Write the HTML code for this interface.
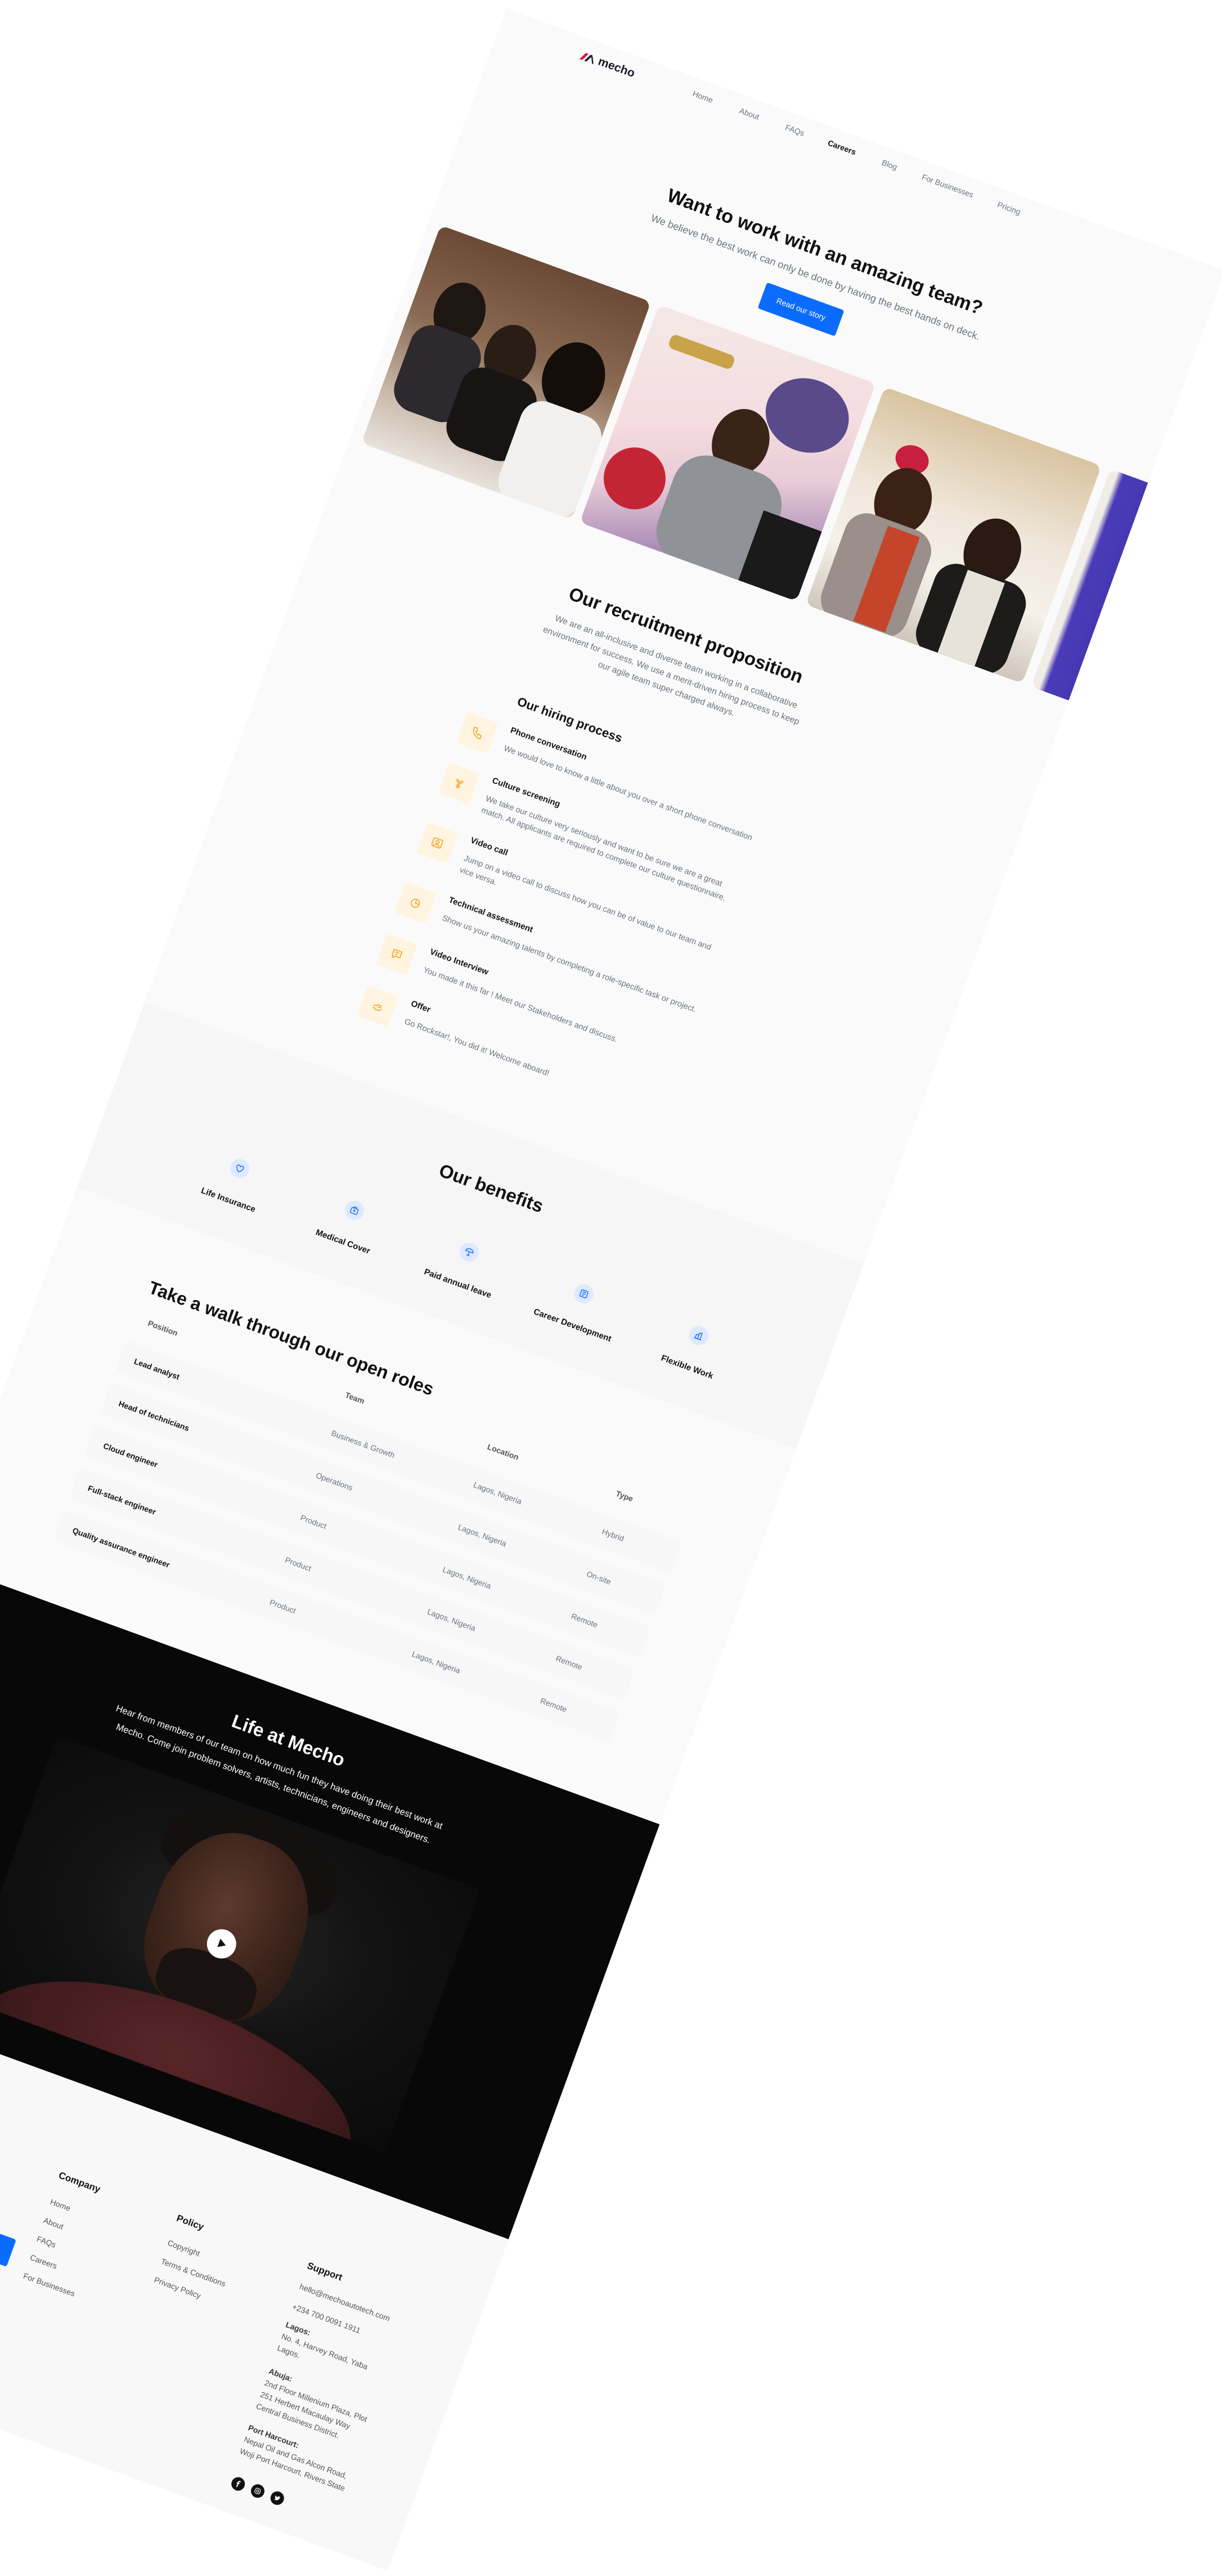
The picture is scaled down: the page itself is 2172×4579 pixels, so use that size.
<!DOCTYPE html>
<html><head><meta charset="utf-8">
<style>
*{margin:0;padding:0;box-sizing:border-box}
html,body{width:2172px;height:4579px;overflow:hidden;background:#fff;font-family:"Liberation Sans",Arial,sans-serif}
#pg{position:absolute;left:900px;top:15px;width:1360px;height:4352px;transform-origin:0 0;transform:rotate(20deg);background:#fafafa;overflow:hidden}
.a{position:absolute}
.nav{width:140px;text-align:center;font-size:14px;color:#6b7280;line-height:20px;top:18px}
.h2{font-weight:700;color:#111;font-size:33px;line-height:42px}
.ib{width:58px;height:58px;background:#fff4e0;border-radius:6px;display:flex;align-items:center;justify-content:center}
.it{font-size:15px;font-weight:700;color:#111;line-height:22px}
.id{font-size:14.5px;color:#6b7280;line-height:22px;width:490px}
.bc{width:34px;height:34px;border-radius:50%;background:#dde9ff;display:flex;align-items:center;justify-content:center}
.bl{width:220px;text-align:center;font-size:15px;font-weight:700;color:#111;line-height:20px}
.row{left:175px;width:1050px;height:58px;background:#f7f7f7;border-radius:8px}
.cell{font-size:14px;color:#6b7280;line-height:20px}
.fh{font-size:17px;font-weight:700;color:#111;line-height:22px}
.fl{font-size:14px;color:#555;line-height:35px}
.fs{font-size:14px;color:#555;line-height:22px;width:200px}
.soc{width:24px;height:24px;border-radius:50%;background:#111;top:4286px;display:flex;align-items:center;justify-content:center}
.img{top:402px;height:412px;border-radius:14px;overflow:hidden}
</style></head><body>
<div id="pg">
<div class="a" style="left:150px;top:22px;width:32px;height:22px">
<svg width="32" height="22" viewBox="0 0 32 22"><path d="M3 18 L10 4 L15 4 L8 18Z" fill="#e0163d"/><path d="M12 18 L19 4 L23 4 L16 18Z" fill="#1a1a2e"/><path d="M22 6 L28 18" stroke="#1a1a2e" stroke-width="2.5" fill="none"/></svg></div>
<div class="a" style="left:186px;top:18px;font-size:21px;font-weight:700;color:#1a1a2e;line-height:28px">mecho</div>
<div class="a nav" style="left:312px">Home</div>
<div class="a nav" style="left:400px">About</div>
<div class="a nav" style="left:486px">FAQs</div>
<div class="a nav" style="left:575px;color:#111;font-weight:700">Careers</div>
<div class="a nav" style="left:665px">Blog</div>
<div class="a nav" style="left:775px">For Businesses</div>
<div class="a nav" style="left:891px">Pricing</div>
<div class="a" style="left:0;width:1360px;top:191px;text-align:center;font-size:34px;font-weight:700;color:#111;line-height:44px">Want to work with an amazing team?</div>
<div class="a" style="left:0;width:1360px;top:250px;text-align:center;font-size:18px;color:#6b7280;line-height:22px">We believe the best work can only be done by having the best hands on deck.</div>
<div class="a" style="left:602px;top:299px;width:146px;height:49px;background:#0a6cff;border-radius:4px;color:#fff;font-size:14px;line-height:49px;text-align:center">Read our story</div>
<div class="a img" style="left:22px;width:398px;background:linear-gradient(180deg,#6b4a36 0%,#8a6a52 40%,#c9b8a8 75%,#e8e2dc 100%)">
 <div class="a" style="left:40px;top:80px;width:90px;height:110px;border-radius:50%;background:#1d1612"></div>
 <div class="a" style="left:20px;top:170px;width:130px;height:160px;border-radius:40px;background:#2c2a2e"></div>
 <div class="a" style="left:150px;top:120px;width:90px;height:110px;border-radius:50%;background:#2a1d16"></div>
 <div class="a" style="left:130px;top:210px;width:140px;height:150px;border-radius:40px;background:#171514"></div>
 <div class="a" style="left:260px;top:110px;width:110px;height:130px;border-radius:50%;background:#140e0b"></div>
 <div class="a" style="left:250px;top:230px;width:150px;height:190px;border-radius:40px;background:#f2f0ee"></div>
</div>
<div class="a img" style="left:435px;width:410px;background:linear-gradient(160deg,#f3e9e6 0%,#f5dce0 40%,#e8cbd6 60%,#7a5aa0 100%)">
 <div class="a" style="left:240px;top:30px;width:150px;height:130px;border-radius:50%;background:#5b4a8a"></div>
 <div class="a" style="left:40px;top:40px;width:120px;height:26px;background:#c9a24a;border-radius:10px"></div>
 <div class="a" style="left:170px;top:120px;width:100px;height:120px;border-radius:50%;background:#3a2418"></div>
 <div class="a" style="left:130px;top:220px;width:200px;height:200px;border-radius:60px;background:#8f9296"></div>
 <div class="a" style="left:10px;top:250px;width:110px;height:110px;border-radius:50%;background:#c42535"></div>
 <div class="a" style="left:300px;top:280px;width:110px;height:132px;background:#1a1a1a"></div>
</div>
<div class="a img" style="left:862px;width:410px;background:linear-gradient(180deg,#d9c4a0 0%,#efe6d9 40%,#f5f1ea 70%,#cfc7bb 100%)">
 <div class="a" style="left:60px;top:80px;width:60px;height:50px;border-radius:50%;background:#c91f3f"></div>
 <div class="a" style="left:50px;top:120px;width:100px;height:120px;border-radius:50%;background:#3b2216"></div>
 <div class="a" style="left:20px;top:220px;width:160px;height:200px;border-radius:40px;background:#9a8f8a"></div>
 <div class="a" style="left:90px;top:230px;width:60px;height:180px;background:#c4452a"></div>
 <div class="a" style="left:230px;top:150px;width:100px;height:120px;border-radius:50%;background:#2a1a12"></div>
 <div class="a" style="left:200px;top:250px;width:170px;height:170px;border-radius:40px;background:#1e1c1a"></div>
 <div class="a" style="left:250px;top:255px;width:70px;height:160px;background:#e8e3da"></div>
</div>
<div class="a img" style="left:1289px;width:410px;background:linear-gradient(90deg,#f0ece6 0px,#f0ece6 14px,#4a3ab8 26px,#2a2a80 100%)"></div>
<div class="a h2" style="left:0;width:1362px;top:917px;text-align:center">Our recruitment proposition</div>
<div class="a" style="left:430px;width:502px;top:976px;text-align:center;font-size:15.5px;color:#6b7280;line-height:25.5px">We are an all-inclusive and diverse team working in a collaborative environment for success. We use a merit-driven hiring process to keep our agile team super charged always.</div>
<div class="a" style="left:440px;top:1136px;font-size:22px;font-weight:700;color:#111;line-height:28px">Our hiring process</div>
<div class="a ib" style="left:363px;top:1199px"><svg width="22" height="22" viewBox="0 0 24 24" fill="none" stroke="#f5a623" stroke-width="1.8"><path d="M5 3h4l2 5-2.5 1.5a11 11 0 0 0 6 6L16 13l5 2v4a2 2 0 0 1-2 2A16 16 0 0 1 3 5a2 2 0 0 1 2-2"/></svg></div>
<div class="a it" style="left:446px;top:1192px">Phone conversation</div>
<div class="a id" style="left:446px;top:1226px">We would love to know a little about you over a short phone conversation</div>
<div class="a ib" style="left:363px;top:1294px"><svg width="22" height="22" viewBox="0 0 24 24" fill="none" stroke="#f5a623" stroke-width="1.8"><path d="M12 21v-9M12 12C8 12 6 9 6 6c3 0 6 2 6 6zM12 12c0-4 3-6 6-6 0 3-2 6-6 6z"/><circle cx="12" cy="18" r="3"/></svg></div>
<div class="a it" style="left:446px;top:1287px">Culture screening</div>
<div class="a id" style="left:446px;top:1321px">We take our culture very seriously and want to be sure we are a great match. All applicants are required to complete our culture questionnaire.</div>
<div class="a ib" style="left:363px;top:1407px"><svg width="22" height="22" viewBox="0 0 24 24" fill="none" stroke="#f5a623" stroke-width="1.8"><rect x="3" y="4" width="18" height="16" rx="2"/><circle cx="12" cy="10" r="3"/><path d="M6 19c1-3 3-4 6-4s5 1 6 4"/></svg></div>
<div class="a it" style="left:446px;top:1400px">Video call</div>
<div class="a id" style="left:446px;top:1434px">Jump on a video call to discuss how you can be of value to our team and vice versa.</div>
<div class="a ib" style="left:363px;top:1520px"><svg width="22" height="22" viewBox="0 0 24 24" fill="none" stroke="#f5a623" stroke-width="1.8"><circle cx="12" cy="13" r="8"/><path d="M12 5v8h8"/></svg></div>
<div class="a it" style="left:446px;top:1513px">Technical assessment</div>
<div class="a id" style="left:446px;top:1547px">Show us your amazing talents by completing a role-specific task or project.</div>
<div class="a ib" style="left:363px;top:1618px"><svg width="22" height="22" viewBox="0 0 24 24" fill="none" stroke="#f5a623" stroke-width="1.8"><path d="M4 4h16v12H10l-4 4v-4H4z"/><path d="M8 8h8M8 12h6"/></svg></div>
<div class="a it" style="left:446px;top:1611px">Video Interview</div>
<div class="a id" style="left:446px;top:1645px">You made it this far ! Meet our Stakeholders and discuss.</div>
<div class="a ib" style="left:363px;top:1716px"><svg width="22" height="22" viewBox="0 0 24 24" fill="none" stroke="#f5a623" stroke-width="1.8"><path d="M3 12h5l3-3h5a2 2 0 0 1 0 4h-4M3 17h4l3 2h7l4-4"/></svg></div>
<div class="a it" style="left:446px;top:1709px">Offer</div>
<div class="a id" style="left:446px;top:1743px">Go Rockstar!, You did it! Welcome aboard!</div>
<div class="a" style="left:0;top:1880px;width:1360px;height:350px;background:#f6f6f6"></div>
<div class="a h2" style="left:392px;width:600px;top:1959px;text-align:center">Our benefits</div>
<div class="a bc" style="left:243px;top:2083px"><svg width="18" height="18" viewBox="0 0 24 24" fill="none" stroke="#1a6cff" stroke-width="2"><path d="M12 20s-8-5-8-11a4 4 0 0 1 8-1 4 4 0 0 1 8 1c0 6-8 11-8 11z"/></svg></div>
<div class="a bl" style="left:150px;top:2150px">Life Insurance</div>
<div class="a bc" style="left:460px;top:2083px"><svg width="18" height="18" viewBox="0 0 24 24" fill="none" stroke="#1a6cff" stroke-width="2"><rect x="4" y="7" width="16" height="13" rx="2"/><path d="M9 7V4h6v3M12 10v6M9 13h6"/></svg></div>
<div class="a bl" style="left:367px;top:2150px">Medical Cover</div>
<div class="a bc" style="left:677px;top:2083px"><svg width="18" height="18" viewBox="0 0 24 24" fill="none" stroke="#1a6cff" stroke-width="2"><path d="M3 11a9 7 0 0 1 18 0zM12 11v9M8 20h8"/></svg></div>
<div class="a bl" style="left:584px;top:2150px">Paid annual leave</div>
<div class="a bc" style="left:894px;top:2083px"><svg width="18" height="18" viewBox="0 0 24 24" fill="none" stroke="#1a6cff" stroke-width="2"><rect x="4" y="4" width="16" height="16" rx="2"/><path d="M8 8h8M8 12h8M8 16h5"/></svg></div>
<div class="a bl" style="left:801px;top:2150px">Career Development</div>
<div class="a bc" style="left:1111px;top:2083px"><svg width="18" height="18" viewBox="0 0 24 24" fill="none" stroke="#1a6cff" stroke-width="2"><path d="M3 20h18M6 20V12l6-3v11M12 20V6l6-2v16"/></svg></div>
<div class="a bl" style="left:1018px;top:2150px">Flexible Work</div>
<div class="a" style="left:181px;top:2332px;font-size:32px;font-weight:700;color:#111;line-height:40px">Take a walk through our open roles</div>
<div class="a cell" style="left:201px;top:2403px;font-weight:700;color:#555">Position</div>
<div class="a cell" style="left:574px;top:2403px;font-weight:700;color:#555">Team</div>
<div class="a cell" style="left:843px;top:2403px;font-weight:700;color:#555">Location</div>
<div class="a cell" style="left:1086px;top:2403px;font-weight:700;color:#555">Type</div>
<div class="a row" style="top:2456px"></div>
<div class="a row" style="top:2536px"></div>
<div class="a row" style="top:2616px"></div>
<div class="a row" style="top:2696px"></div>
<div class="a row" style="top:2776px"></div>
<div class="a cell" style="left:201px;top:2475px;color:#111;font-weight:700">Lead analyst</div>
<div class="a cell" style="left:574px;top:2475px">Business &amp; Growth</div>
<div class="a cell" style="left:843px;top:2475px">Lagos, Nigeria</div>
<div class="a cell" style="left:1086px;top:2475px">Hybrid</div>
<div class="a cell" style="left:201px;top:2555px;color:#111;font-weight:700">Head of technicians</div>
<div class="a cell" style="left:574px;top:2555px">Operations</div>
<div class="a cell" style="left:843px;top:2555px">Lagos, Nigeria</div>
<div class="a cell" style="left:1086px;top:2555px">On-site</div>
<div class="a cell" style="left:201px;top:2635px;color:#111;font-weight:700">Cloud engineer</div>
<div class="a cell" style="left:574px;top:2635px">Product</div>
<div class="a cell" style="left:843px;top:2635px">Lagos, Nigeria</div>
<div class="a cell" style="left:1086px;top:2635px">Remote</div>
<div class="a cell" style="left:201px;top:2715px;color:#111;font-weight:700">Full-stack engineer</div>
<div class="a cell" style="left:574px;top:2715px">Product</div>
<div class="a cell" style="left:843px;top:2715px">Lagos, Nigeria</div>
<div class="a cell" style="left:1086px;top:2715px">Remote</div>
<div class="a cell" style="left:201px;top:2795px;color:#111;font-weight:700">Quality assurance engineer</div>
<div class="a cell" style="left:574px;top:2795px">Product</div>
<div class="a cell" style="left:843px;top:2795px">Lagos, Nigeria</div>
<div class="a cell" style="left:1086px;top:2795px">Remote</div>
<div class="a" style="left:0;top:2940px;width:1360px;height:785px;background:#080808"></div>
<div class="a" style="left:389px;width:600px;top:3005px;text-align:center;font-size:33px;font-weight:700;color:#fff;line-height:42px">Life at Mecho</div>
<div class="a" style="left:370px;width:640px;top:3061px;text-align:center;font-size:16.5px;color:#fff;line-height:31px">Hear from members of our team on how much fun they have doing their best work at Mecho. Come join problem solvers, artists, technicians, engineers and designers.</div>
<div class="a" style="left:300px;top:3158px;width:800px;height:497px;overflow:hidden;background:radial-gradient(ellipse at 50% 45%,#262626 0%,#131313 45%,#0a0a0a 100%)">
 <div class="a" style="left:240px;top:10px;width:320px;height:150px;border-radius:50% 50% 30% 30%;background:#141010"></div>
 <div class="a" style="left:265px;top:50px;width:270px;height:330px;border-radius:45% 45% 40% 40%;background:radial-gradient(ellipse at 45% 40%,#5e3a2e 0%,#3e251c 50%,#22150f 100%)"></div>
 <div class="a" style="left:310px;top:270px;width:180px;height:110px;border-radius:40%;background:#1a1210"></div>
 <div class="a" style="left:40px;top:370px;width:700px;height:300px;border-radius:50% 50% 0 0;background:radial-gradient(ellipse at 50% 30%,#5a2628 0%,#3e1a1c 60%,#221010 100%)"></div>
 <div class="a" style="left:375px;top:222px;width:52px;height:52px;border-radius:50%;background:#fff;display:flex;align-items:center;justify-content:center"><svg width="22" height="22" viewBox="0 0 22 22"><path d="M6 3 L19 11 L6 19Z" fill="#111"/></svg></div>
</div>
<div class="a" style="left:0;top:3725px;width:1360px;height:700px;background:#f8f8f8"></div>
<div class="a" style="left:420px;top:4025px;width:118px;height:51px;background:#0a6cff;border-radius:4px"></div>
<div class="a fh" style="left:570px;top:3880px">Company</div>
<div class="a fl" style="left:572px;top:3923px">Home<br>About<br>FAQs<br>Careers<br>For Businesses</div>
<div class="a fh" style="left:793px;top:3880px">Policy</div>
<div class="a fl" style="left:793px;top:3920px">Copyright<br>Terms &amp; Conditions<br>Privacy Policy</div>
<div class="a fh" style="left:1040px;top:3880px">Support</div>
<div class="a fs" style="left:1040px;top:3919px;width:260px">hello@mechoautotech.com</div>
<div class="a fs" style="left:1040px;top:3957px">+234 700 0091 1911</div>
<div class="a fs" style="left:1040px;top:3991px"><b style="color:#333">Lagos:</b><br>No. 4, Harvey Road, Yaba Lagos.</div>
<div class="a fs" style="left:1040px;top:4079px"><b style="color:#333">Abuja:</b><br>2nd Floor Millenium Plaza, Plot 251 Herbert Macaulay Way Central Business District.</div>
<div class="a fs" style="left:1040px;top:4186px"><b style="color:#333">Port Harcourt:</b><br>Nepal Oil and Gas Alcon Road, Woji Port Harcourt, Rivers State</div>
<div class="a soc" style="left:1045px"><svg width="12" height="12" viewBox="0 0 12 12"><path d="M7 2h2V0H7a2.5 2.5 0 0 0-2.5 2.5V4H3v2h1.5v6h2V6H8l.5-2h-2V3a1 1 0 0 1 .5-1z" fill="#fff"/></svg></div>
<div class="a soc" style="left:1082px"><svg width="12" height="12" viewBox="0 0 12 12" fill="none" stroke="#fff" stroke-width="1.2"><rect x="1.5" y="1.5" width="9" height="9" rx="2.5"/><circle cx="6" cy="6" r="2"/></svg></div>
<div class="a soc" style="left:1119px"><svg width="12" height="12" viewBox="0 0 12 12"><path d="M11 3c-.4.2-.8.3-1.2.3.4-.3.7-.7.9-1.1-.4.2-.9.4-1.3.5a2 2 0 0 0-3.5 1.8C4.2 4.4 2.7 3.6 1.7 2.4c-.6 1-.3 2.2.6 2.8-.3 0-.6-.1-.9-.3 0 1 .7 1.9 1.7 2.1-.3.1-.6.1-.9 0 .3.8 1 1.4 1.9 1.4A4 4 0 0 1 1 9.2 5.7 5.7 0 0 0 10 4.2V4c.4-.3.7-.6 1-1z" fill="#fff"/></svg></div>
</div>
</body></html>
